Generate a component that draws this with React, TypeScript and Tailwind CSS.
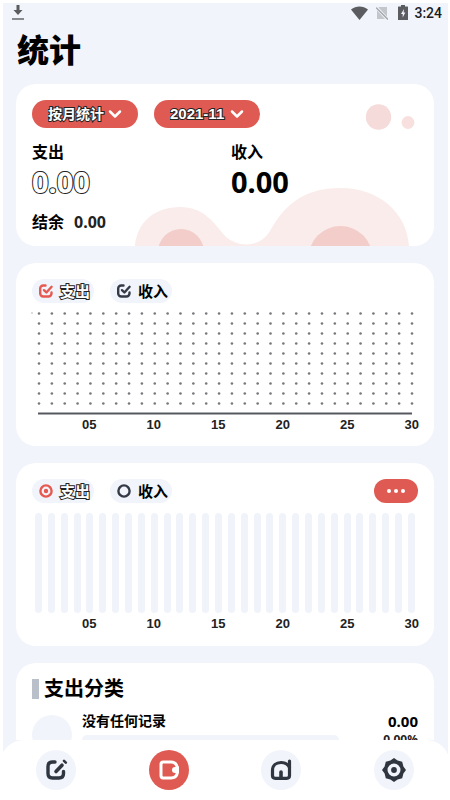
import type { ReactNode } from "react";

const days = Array.from({ length: 30 }, (_, i) => i);
const rows = Array.from({ length: 10 }, (_, i) => i);
const ticks = ["05", "10", "15", "20", "25", "30"];

const cjk = "font-['Noto_Sans','Noto_Sans_CJK_SC',sans-serif]";
const card = "relative overflow-hidden rounded-[20px] bg-white px-4 pt-4";
const outline = "text-white [-webkit-text-stroke:2px_#222] [paint-order:stroke_fill]";

function StatusBar() {
  return (
    <div className="flex h-5 items-center justify-between pl-[9px] pr-1.5 text-[#5b5c60]">
      <svg className="h-4 w-3" viewBox="0 0 12 16" fill="currentColor">
        <path d="M4.500 0h3v5H10.500L6 10 1.500 5h3z" />
        <path d="M0 13h12v2H0z" opacity="0.7" />
      </svg>
      <div className="flex items-center">
        <svg className="h-4 w-[17px]" viewBox="0 0 17 16" fill="currentColor">
          <path d="M0 4.500C5 .600 12 .600 17 4.500L8.500 15z" />
        </svg>
        <svg className="ml-2 h-4 w-3" viewBox="0 0 12 16">
          <path d="M3 2h8v12H1V4z" fill="#c3c6ca" />
          <path d="M0 2l12 13" stroke="#f1f4fa" strokeWidth="3" />
          <path d="M0 2.500l12 12" stroke="#a3a6aa" strokeWidth="1.300" />
        </svg>
        <svg className="ml-2.5 h-4 w-2.5" viewBox="0 0 10 16">
          <path d="M3 0h4v1.500h2.500a.5.5 0 0 1 .5.5v12.500a.5.5 0 0 1-.5.5h-9a.5.5 0 0 1-.5-.5V2a.5.5 0 0 1 .5-.5H3z" fill="currentColor" />
          <path d="M6 4L3 9h1.700v3.500L7.300 7.500H5.600z" fill="#f1f4fa" />
        </svg>
        <span className="ml-1.5 font-['Roboto',sans-serif] text-sm font-medium text-[#1c1c1e]">3:24</span>
      </div>
    </div>
  );
}

function Picker({ label, value, size }: { label: string; value: string; size: string }) {
  return (
    <div className="grid w-[106px] items-center">
      <select
        aria-label={label}
        className={`col-start-1 row-start-1 h-7 w-full appearance-none rounded-full bg-[#df5a52] pl-4 font-['Liberation_Sans','Noto_Sans_CJK_SC',sans-serif] font-bold ${outline} ${size}`}
      >
        <option>{value}</option>
      </select>
      <svg className="pointer-events-none col-start-1 row-start-1 mr-4 h-2.5 w-3.5 justify-self-end" viewBox="0 0 14 10" fill="none" stroke="white" strokeWidth="2.500" strokeLinecap="round" strokeLinejoin="round">
        <path d="M2 2.500l5 5 5-5" />
      </svg>
    </div>
  );
}

function Toggle({ type, name, label, on, outlined, children }: { type: "checkbox" | "radio"; name: string; label: string; on: boolean; outlined?: boolean; children: ReactNode }) {
  return (
    <label className="flex h-6 w-[62px] items-center gap-1.5 rounded-full bg-[#f1f4fa] pl-1.5">
      <span className="grid size-4 place-items-center">
        <input type={type} name={name} defaultChecked={on} className="col-start-1 row-start-1 size-4 appearance-none" />
        <span className="pointer-events-none col-start-1 row-start-1">{children}</span>
      </span>
      <span className={`text-[15px] font-bold whitespace-nowrap ${outlined ? outline : "text-black"}`}>{label}</span>
    </label>
  );
}

function CheckMark({ className }: { className: string }) {
  return (
    <svg className={className} viewBox="0 0 16 16" fill="none" stroke="currentColor" strokeWidth="2.400" strokeLinecap="round" strokeLinejoin="round">
      <path d="M7.500 2.500H5.200a3 3 0 0 0-3 3V10.500a3 3 0 0 0 3 3h5.300a3 3 0 0 0 3-3V9.500" />
      <path d="M6 7.200l2.400 2.300L13.600 3.800" />
    </svg>
  );
}

function Ring({ className, dot }: { className: string; dot?: boolean }) {
  return (
    <svg className={className} viewBox="0 0 16 16" fill="none" stroke="currentColor" strokeWidth="2.400">
      <circle cx="8" cy="8" r="5.600" />
      {dot && <circle cx="8" cy="8" r="2.200" fill="currentColor" stroke="none" />}
    </svg>
  );
}

function Axis() {
  return (
    <div className="-mr-px grid grid-cols-6 text-right font-['Liberation_Sans',sans-serif] text-[13px] leading-4 font-bold text-[#222]">
      {ticks.map((t) => (
        <span key={t}>{t}</span>
      ))}
    </div>
  );
}

function Summary() {
  return (
    <section className={`${card} pb-3`}>
      <svg className="absolute top-0 right-0 h-[162px] w-[418px]" viewBox="16 84 418 162">
        <circle cx="378.500" cy="117" r="12.700" fill="#f5dbd9" />
        <circle cx="408" cy="122.500" r="6.400" fill="#f7e0de" />
        <path d="M135 246C137 222 155 207 180 207C204 207 214 223 225 236C238 248 260 248 270 231C284 206 302 188 341 188C378 188 407 212 409 246Z" fill="#faeceb" />
        <circle cx="181" cy="252" r="23" fill="#f2cdca" />
        <circle cx="340.500" cy="258" r="32" fill="#f2cdca" />
      </svg>
      <div className="relative">
        <div className="flex gap-4">
          <Picker label="统计方式" value="按月统计" size="text-sm" />
          <Picker label="月份" value="2021-11" size="text-[15px]" />
        </div>
        <dl className="mt-3 grid grid-cols-2 gap-x-3 font-bold">
          <div>
            <dt className="text-base leading-6">支出</dt>
            <dd className={`text-[29px] leading-9 ${outline}`}>0.00</dd>
          </div>
          <div>
            <dt className="text-base leading-6">收入</dt>
            <dd className="text-[29px] leading-9">0.00</dd>
          </div>
          <div className="mt-2.5 flex gap-2.5 leading-6">
            <dt>结余</dt>
            <dd className="text-[#222]">0.00</dd>
          </div>
        </dl>
      </div>
    </section>
  );
}

function TrendCard() {
  return (
    <section className={`${card} pb-[13px]`}>
      <div className="flex gap-4">
        <Toggle type="checkbox" name="trend-out" label="支出" on outlined>
          <CheckMark className="size-4 text-[#e65a52]" />
        </Toggle>
        <Toggle type="checkbox" name="trend-in" label="收入" on>
          <CheckMark className="size-4 text-[#343b47]" />
        </Toggle>
      </div>
      <div className="mt-2 mb-0.5 pr-1.5 pl-[7px]">
        <svg className="block h-[104px] w-full overflow-visible">
          {rows.map((r) =>
            days.map((d) => <circle key={`${r}-${d}`} cx={`${(d / 29) * 100}%`} cy={2.5 + r * 10} r="1.300" fill="#77787b" />),
          )}
          <circle cx="-7" cy="2" r="0.800" fill="#b0b0b0" />
          <line x1="-1" x2="100%" y1="102.500" y2="102.500" stroke="#55585e" strokeWidth="2" />
        </svg>
      </div>
      <Axis />
    </section>
  );
}

function DailyCard() {
  return (
    <section className={`${card} pb-3.5`}>
      <div className="flex gap-4">
        <Toggle type="radio" name="daily" label="支出" on outlined>
          <Ring className="size-4 text-[#e65a52]" dot />
        </Toggle>
        <Toggle type="radio" name="daily" label="收入" on={false}>
          <Ring className="size-4 text-[#343b47]" />
        </Toggle>
        <button type="button" aria-label="更多" className="ml-auto flex h-6 w-11 items-center justify-center gap-[3px] rounded-full bg-[#df5a52]">
          <span className="size-1 rounded-full bg-white" />
          <span className="size-1 rounded-full bg-white" />
          <span className="size-1 rounded-full bg-white" />
        </button>
      </div>
      <div className="mt-2.5 mb-[3px] flex justify-between px-[3px]">
        {days.map((d) => (
          <span key={d} className="h-[100px] w-[7px] rounded-full bg-[#f0f4fa]" />
        ))}
      </div>
      <Axis />
    </section>
  );
}

function CategoryCard() {
  return (
    <section className={`${card} pb-4`}>
      <h2 className="flex items-center gap-[5px] text-xl leading-5 font-bold">
        <span className="h-5 w-[7px] bg-[#b9c0ca]" />
        支出分类
      </h2>
      <div className="mt-3 flex gap-2.5">
        <span className="mt-1 size-10 rounded-full bg-[#f1f4fa]" />
        <div className="flex-1">
          <div className="flex justify-between text-sm leading-5 font-bold">
            <span>没有任何记录</span>
            <span className="text-[15px]">0.00</span>
          </div>
          <div className="flex items-start">
            <span className="mt-1 mr-11 h-2.5 flex-1 rounded-full bg-[#f1f4fa]" />
            <span className="text-xs leading-[18px] font-bold text-[#222]">0.00%</span>
          </div>
        </div>
      </div>
    </section>
  );
}

function NavButton({ label, active, children }: { label: string; active?: boolean; children: ReactNode }) {
  return (
    <button
      type="button"
      aria-label={label}
      className={`flex size-10 items-center justify-center rounded-full ${active ? "bg-[#df5a52] text-white" : "bg-[#f1f4fa] text-[#2f3640]"}`}
    >
      <svg className="size-6" viewBox="0 0 24 24" fill="none" stroke="currentColor" strokeWidth="3.400" strokeLinejoin="round" strokeLinecap="round">
        {children}
      </svg>
    </button>
  );
}

function Nav() {
  return (
    <div className="mr-0.5 ml-[3px] bg-[#f1f4fa]">
      <nav className="-mr-0.5 -ml-[3px] grid h-[60px] grid-cols-4 place-items-center rounded-t-3xl bg-white">
        <NavButton label="记账">
          <path d="M11 4H8.500Q4 4 4 8.500V15.500Q4 20 8.500 20H15Q19.500 20 19.500 15.500V13.500" />
          <path d="M12 13.500L18 7.200" strokeWidth="3.600" />
          <path d="M20 2.800L21.800 4.600" strokeWidth="2.600" />
        </NavButton>
        <NavButton label="统计" active>
          <path d="M20.500 9V10Q19.500 4 14 4H6.200Q4 4 4 6.200V17.800Q4 20 6.200 20H14Q19.500 20 20.500 14.500" strokeWidth="3" />
          <circle cx="18" cy="12" r="3" fill="currentColor" stroke="none" />
          <path d="M18 9h4v6h-4z" fill="currentColor" stroke="none" />
        </NavButton>
        <NavButton label="资产">
          <path d="M20.500 3V17.500Q20.500 20.300 17.700 20.300H6.300Q3.500 20.300 3.500 17.500V12.500C3.500 7.500 7 4.500 12 4.500C16 4.500 19 6.500 20.500 9.500" strokeWidth="3.200" />
          <path d="M12 14V20" strokeWidth="3.600" />
        </NavButton>
        <NavButton label="设置">
          <path d="M12 0L15.600 2.600 20.200 3.800 21.400 8.400 24 12 21.400 15.600 20.200 20.200 15.600 21.400 12 24 8.400 21.400 3.800 20.200 2.600 15.600 0 12 2.600 8.400 3.800 3.800 8.400 2.600ZM12 5.500A6.500 6.500 0 0 0 12 18.500A6.500 6.500 0 0 0 12 5.500Z" fill="currentColor" fillRule="evenodd" stroke="none" />
          <circle cx="12" cy="12" r="2.900" fill="currentColor" stroke="none" />
        </NavButton>
      </nav>
    </div>
  );
}

export default function App() {
  return (
    <div className={`flex h-screen flex-col bg-white pt-[3px] text-black ${cjk}`}>
      <main className="mr-0.5 ml-[3px] min-h-0 flex-1 overflow-y-auto bg-[#f1f4fa] [scrollbar-width:none]">
        <StatusBar />
        <h1 className="mt-[7px] ml-3.5 text-[32px] leading-10 font-black">统计</h1>
        <div className="mt-3.5 mr-3.5 ml-[13px] flex flex-col gap-[17px]">
          <Summary />
          <TrendCard />
          <DailyCard />
          <CategoryCard />
        </div>
      </main>
      <Nav />
    </div>
  );
}
